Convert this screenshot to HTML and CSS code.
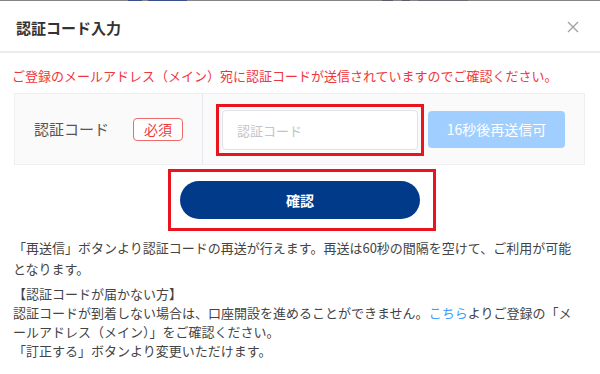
FILE: index.html
```html
<!DOCTYPE html>
<html lang="ja">
<head>
<meta charset="utf-8">
<link rel="stylesheet" href="styles.css">
</head>
<body>
<div class="topline"></div>
<header class="head">
  <h1 class="title">認証コード入力</h1>
  <svg class="close" width="12" height="12" viewBox="0 0 12 12"><path d="M1 1L11 11M11 1L1 11" stroke="#a0a0a0" stroke-width="1.3" fill="none"/></svg>
</header>
<main class="body">
  <p class="notice">ご登録のメールアドレス（メイン）宛に認証コードが送信されていますのでご確認ください。</p>
  <div class="form">
    <div class="label-cell">
      <span class="label">認証コード</span>
      <span class="badge">必須</span>
    </div>
    <div class="field-cell">
      <div class="hl hl-input">
        <div class="input">認証コード</div>
      </div>
      <div class="resend">16秒後再送信可</div>
    </div>
  </div>
  <div class="hl hl-btn">
    <div class="confirm">確認</div>
  </div>
  <p class="info1">「再送信」ボタンより認証コードの再送が行えます。再送は60秒の間隔を空けて、ご利用が可能となります。</p>
  <p class="info2">【認証コードが届かない方】<br>認証コードが到着しない場合は、口座開設を進めることができません。<span class="link">こちら</span>よりご登録の「メールアドレス（メイン）」をご確認ください。<br>「訂正する」ボタンより変更いただけます。</p>
</main>
</body>
</html>
```
FILE: styles.css
```css
* { box-sizing: border-box; }
html, body { margin: 0; padding: 0; background: #fff; }
body {
  width: 600px;
  height: 374px;
  overflow: hidden;
  font-family: "Noto Sans CJK JP", "Noto Sans", sans-serif;
  color: #444;
}
.topline {
  height: 1px;
  background: linear-gradient(to right,
    #858585 0, #858585 128px, #3a4f8a 128px, #3a4f8a 142px, #858585 142px, #858585 148px,
    #3a4f8a 148px, #3a4f8a 187px, #858585 187px, #858585 382px, #5a5e6a 382px, #5a5e6a 393px,
    #858585 393px, #858585 402px, #5a5e6a 402px, #5a5e6a 410px, #858585 410px, #858585 418px,
    #6a6d75 418px, #6a6d75 468px, #858585 468px);
}
.head {
  height: 52px;
  display: flex;
  align-items: center;
  justify-content: space-between;
  padding: 0 21px 0 16px;
  border-bottom: 2px solid #ececec;
}
.title {
  margin: 0;
  font-size: 15px;
  font-weight: 700;
  color: #333;
  line-height: 20px;
  padding-top: 4px;
}
.close { display: block; margin-top: 2px; }
.body { padding: 0; }
.notice {
  margin: 13px 0 0 12px;
  font-size: 13px;
  line-height: 19px;
  color: #f0353c;
}
.form {
  margin: 8px 0 0 14px;
  width: 571px;
  height: 72px;
  border: 1px solid #efeff2;
  background: #fafafa;
  display: flex;
}
.label-cell {
  width: 188px;
  border-right: 1px solid #e6e6ee;
  display: flex;
  align-items: center;
  padding: 0 0 0 19px;
}
.label {
  font-size: 15px;
  color: #555;
  width: 99px;
  padding-bottom: 2px;
}
.badge {
  width: 50px;
  height: 23px;
  border: 1px solid #ec6b6b;
  border-radius: 4px;
  color: #ef3a3a;
  font-size: 14px;
  display: flex;
  align-items: center;
  justify-content: center;
  background: #fff;
}
.field-cell {
  flex: 1;
  display: flex;
  align-items: center;
  padding: 0 0 0 13px;
  gap: 4px;
}
.hl {
  border: 3px solid #e8141e;
}
.hl-input {
  width: 208px;
  height: 52px;
  padding: 3px;
  margin-top: 2px;
}
.input {
  width: 196px;
  height: 40px;
  background: #fff;
  border: 1px solid #e2e3e8;
  border-radius: 4px;
  font-size: 13px;
  color: #c0c4cc;
  display: flex;
  align-items: center;
  padding-left: 14px;
}
.resend {
  width: 137px;
  height: 37px;
  background: #a0cfff;
  border-radius: 4px;
  color: #fff;
  font-size: 14px;
  display: flex;
  align-items: center;
  justify-content: center;
}
.hl-btn {
  margin: 4px 0 0 168px;
  width: 268px;
  height: 62px;
  padding: 9px;
}
.confirm {
  width: 240px;
  height: 38px;
  border-radius: 19px;
  background: #023a8a;
  color: #fff;
  font-size: 14px;
  font-weight: 700;
  display: flex;
  align-items: center;
  justify-content: center;
}
.info1, .info2 {
  width: 566px;
  margin-left: 13px;
  font-size: 13px;
  color: #444;
}
.info1 {
  margin-top: 6px;
  margin-bottom: 0;
  line-height: 21px;
}
.info2 {
  margin-top: 5px;
  margin-bottom: 0;
  line-height: 19px;
}
.link { color: #409eff; }
```
